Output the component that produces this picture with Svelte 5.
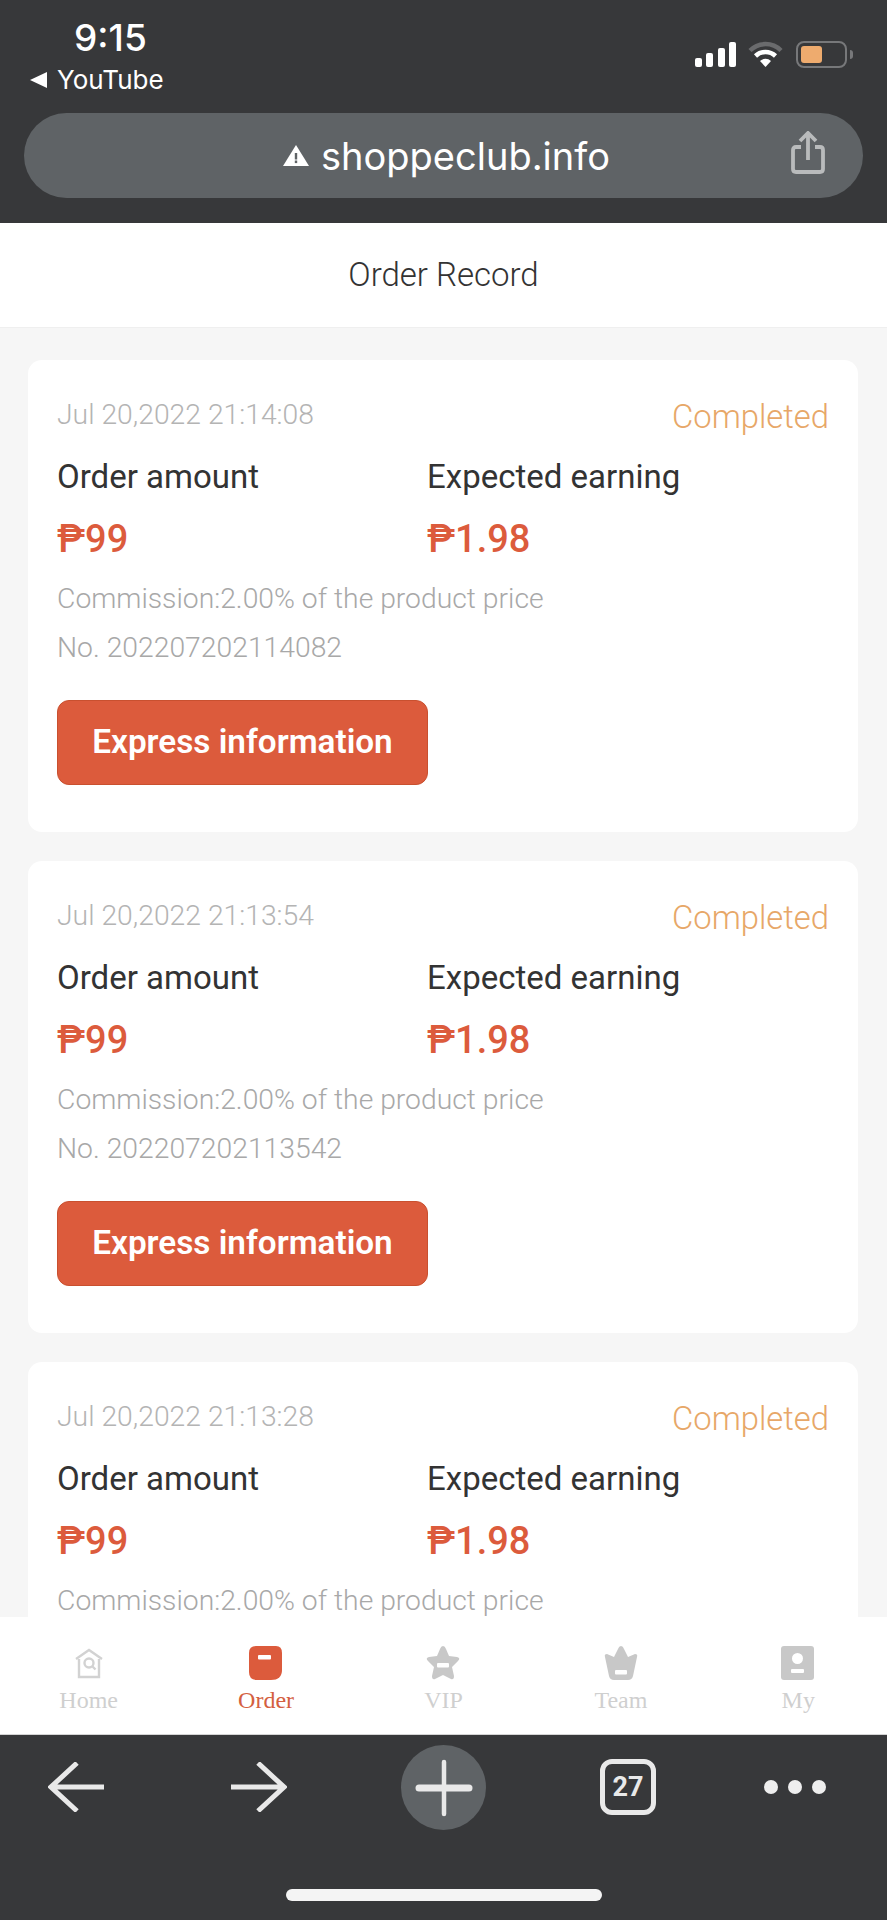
<script>
  const orders = [
    { time: 'Jul 20,2022 21:14:08', no: '202207202114082' },
    { time: 'Jul 20,2022 21:13:54', no: '202207202113542' },
    { time: 'Jul 20,2022 21:13:28', no: '202207202113282' },
  ];

  const tabs = ['Home', 'Order', 'VIP', 'Team', 'My'];
  const active = 'Order';
</script>

<div class="page">
  <header class="chrome">
    <div class="status">
      <div class="status-left">
        <div class="time">9:15</div>
        <div class="back-app"><span class="tri"></span>YouTube</div>
      </div>
      <div class="status-right">
        <svg class="signal" width="41" height="25" viewBox="0 0 41 25" fill="#fff" aria-hidden="true">
          <rect x="0" y="16" width="7" height="9" rx="2" />
          <rect x="11" y="11" width="7" height="14" rx="2" />
          <rect x="23" y="6" width="7" height="19" rx="2" />
          <rect x="34" y="0" width="7" height="25" rx="2" />
        </svg>
        <svg class="wifi" width="35" height="26" viewBox="0 0 35 26" aria-hidden="true">
          <path d="M2 9.5 A22 22 0 0 1 33 9.5" fill="none" stroke="#6a6b6d" stroke-width="4.5" />
          <path d="M7.5 15 A14.5 14.5 0 0 1 27.5 15" fill="none" stroke="#fff" stroke-width="4.5" />
          <path d="M12 20 L17.5 26 L23 20 A8 8 0 0 0 12 20 Z" fill="#fff" />
        </svg>
        <div class="battery"><span class="battery-fill"></span></div>
        <span class="battery-nub"></span>
      </div>
    </div>
    <div class="urlbar">
      <div class="url">
        <svg width="26" height="21" viewBox="0 0 26 21" aria-hidden="true">
          <path d="M13 0 L26 21 H0 Z" fill="#fff" />
          <rect x="11.8" y="8" width="2.4" height="6.5" fill="#5f6366" />
          <rect x="11.8" y="15.5" width="2.4" height="2.6" fill="#5f6366" />
        </svg>
        <span>shoppeclub.info</span>
      </div>
      <svg class="share" width="34" height="43" viewBox="0 0 34 43" fill="none" stroke="#b9bbbc" stroke-width="3.8" aria-hidden="true">
        <path d="M10 16 H5 Q2 16 2 19 V38 Q2 41 5 41 H29 Q32 41 32 38 V19 Q32 16 29 16 H24" />
        <path d="M17 29 V3 M9 10 L17 2 L25 10" />
      </svg>
    </div>
  </header>

  <div class="title">Order Record</div>

  <main class="list">
    {#each orders as order}
      <section class="card">
        <div class="card-top">
          <span class="date">{order.time}</span>
          <span class="state">Completed</span>
        </div>
        <div class="cols">
          <div class="col">
            <div class="label">Order amount</div>
            <div class="amount">₱99</div>
          </div>
          <div class="col">
            <div class="label">Expected earning</div>
            <div class="amount">₱1.98</div>
          </div>
        </div>
        <div class="meta">Commission:2.00% of the product price</div>
        <div class="meta">No. {order.no}</div>
        <button class="express">Express information</button>
      </section>
    {/each}
  </main>

  <nav class="tabbar">
    {#each tabs as tab}
      <div class="tab" class:on={tab === active}>
        <svg width="34" height="34" viewBox="0 0 34 34" aria-hidden="true">
          {#if tab === 'Home'}
            <g fill="none" stroke="#d2d2d2" stroke-width="2.4">
              <path d="M4 13 L17 4 L30 13" />
              <path d="M7 13 V31 H27 V13" />
              <circle cx="17" cy="17" r="4.5" />
              <path d="M20.5 20.5 L23.5 23.5" />
            </g>
          {:else if tab === 'Order'}
            <path d="M7 0 H27 Q33 0 33 7 V24 Q33 34 22 34 H8 Q0 34 0 26 V7 Q0 0 7 0 Z" fill="#dc5b3c" />
            <rect x="9" y="9" width="13" height="4.5" rx="1" fill="#fff" />
          {:else if tab === 'VIP'}
            <path d="M17 0 Q19 0 20 3 L23 10 L31 11 Q35 12 32 15 L26 21 L28 30 Q28 34 25 33 L17 29 L9 33 Q6 34 6 30 L8 21 L2 15 Q-1 12 3 11 L11 10 L14 3 Q15 0 17 0 Z" fill="#c8c8c8" />
            <rect x="11" y="17" width="12" height="4.5" rx="1" fill="#fff" />
          {:else if tab === 'Team'}
            <path d="M17 0 Q19 0 20 3 L24 11 L31 8 Q34 8 33 11 L29 30 Q28 34 24 34 H10 Q6 34 5 30 L1 11 Q0 8 3 8 L10 11 L14 3 Q15 0 17 0 Z" fill="#c8c8c8" />
            <rect x="11" y="24" width="12" height="4.5" rx="1" fill="#fff" />
          {:else}
            <rect x="0" y="0" width="33" height="34" rx="3" fill="#c8c8c8" />
            <circle cx="16.5" cy="12.5" r="5.5" fill="#fff" />
            <rect x="10" y="23" width="13" height="4" rx="1" fill="#fff" />
          {/if}
        </svg>
        <span>{tab}</span>
      </div>
    {/each}
  </nav>

  <footer class="toolbar">
    <div class="tools">
      <svg width="56" height="50" viewBox="0 0 56 50" fill="none" stroke="#e9e9e9" stroke-width="5" aria-hidden="true">
        <path d="M56 25 H4 M29 1 L3 25 L29 49" />
      </svg>
      <svg class="fwd" width="56" height="50" viewBox="0 0 56 50" fill="none" stroke="#e9e9e9" stroke-width="5" aria-hidden="true">
        <path d="M0 25 H52 M27 1 L53 25 L27 49" />
      </svg>
      <div class="plus">
        <svg width="58" height="58" viewBox="0 0 58 58" fill="none" stroke="#e9e9e9" stroke-linecap="round" aria-hidden="true">
          <path d="M29 3 V55" stroke-width="4.5" />
          <path d="M4 29 H54" stroke-width="7" />
        </svg>
      </div>
      <div class="count">27</div>
      <div class="dots"><i></i><i></i><i></i></div>
    </div>
    <div class="home-bar"></div>
  </footer>
</div>

<style>
  :global(body) {
    background: #f6f6f6;
  }

  .page {
    height: 1920px;
    display: flex;
    flex-direction: column;
    overflow: hidden;
    font-family: Roboto, sans-serif;
  }

  /* browser chrome */
  .chrome {
    height: 223px;
    flex: none;
    box-sizing: border-box;
    background: #37383a;
    color: #fff;
    padding: 0 24px;
  }

  .status {
    height: 113px;
    display: flex;
    justify-content: space-between;
  }

  .status-left {
    padding: 17px 0 0 6px;
  }

  .time {
    font: 500 37px/42px Inter, sans-serif;
    padding-left: 44px;
  }

  .back-app {
    display: flex;
    align-items: center;
    gap: 10px;
    margin-top: 6px;
    font: 400 26px/30px Inter, sans-serif;
  }

  .tri {
    width: 0;
    height: 0;
    border-style: solid;
    border-width: 8.5px 17px 8.5px 0;
    border-color: transparent #fff transparent transparent;
  }

  .status-right {
    display: flex;
    align-items: center;
    height: 26px;
    margin-top: 41px;
    margin-right: 10px;
  }

  .wifi {
    margin-left: 12px;
  }

  .battery {
    width: 51px;
    height: 27px;
    box-sizing: border-box;
    margin-left: 13px;
    padding: 3px;
    border: 2px solid #77787a;
    border-radius: 8px;
  }

  .battery-fill {
    display: block;
    width: 21px;
    height: 17px;
    border-radius: 3px;
    background: #eeab6e;
  }

  .battery-nub {
    width: 3px;
    height: 9px;
    margin-left: 3px;
    border-radius: 0 3px 3px 0;
    background: #77787a;
  }

  .urlbar {
    position: relative;
    height: 85px;
    box-sizing: border-box;
    padding-left: 6px;
    border-radius: 43px;
    background: #5f6366;
    display: flex;
    align-items: center;
    justify-content: center;
  }

  .url {
    display: flex;
    align-items: center;
    gap: 12px;
    font: 400 38px/50px Inter, sans-serif;
  }

  .share {
    position: absolute;
    right: 38px;
    top: 18px;
  }

  /* page */
  .title {
    height: 105px;
    flex: none;
    box-sizing: border-box;
    background: #fff;
    border-bottom: 1px solid #efefef;
    text-align: center;
    font-size: 33px;
    font-weight: 300;
    line-height: 103px;
    color: #333;
  }

  .list {
    flex: 1;
    min-height: 0;
    overflow: hidden;
    padding: 32px 29px 0 28px;
    display: flex;
    flex-direction: column;
    gap: 29px;
    background: #f6f6f6;
  }

  .card {
    flex: none;
    height: 472px;
    box-sizing: border-box;
    padding: 35px 29px 0;
    border-radius: 14px;
    background: #fff;
  }

  .card-top {
    display: flex;
    justify-content: space-between;
    align-items: flex-start;
  }

  .date {
    font-size: 28.3px;
    font-weight: 300;
    line-height: 40px;
    color: #b4b4b4;
  }

  .state {
    font-size: 32.8px;
    font-weight: 300;
    line-height: 44px;
    color: #e7a768;
  }

  .cols {
    display: flex;
    margin-top: 16px;
  }

  .col {
    width: 370px;
  }

  .label {
    font-size: 33px;
    line-height: 44px;
    color: #333;
  }

  .amount {
    margin-top: 18px;
    font-size: 38px;
    font-weight: 500;
    line-height: 44px;
    color: #dc5b3c;
  }

  .meta {
    font-size: 28.3px;
    font-weight: 300;
    line-height: 49px;
    color: #a8a8a8;
  }

  .cols + .meta {
    margin-top: 13px;
  }

  .express {
    display: block;
    width: 371px;
    height: 85px;
    margin-top: 28px;
    padding: 0 0 3px;
    border: 1px solid #c9502f;
    border-radius: 12px;
    background: #dc5b3c;
    color: #fff;
    font-family: Roboto, sans-serif;
    font-size: 33.3px;
    font-weight: 600;
  }

  /* bottom tabs */
  .tabbar {
    height: 118px;
    flex: none;
    box-sizing: border-box;
    background: #fff;
    border-bottom: 1px solid #d4d4d4;
    padding-top: 29px;
    display: grid;
    grid-template-columns: repeat(5, 1fr);
  }

  .tab {
    display: flex;
    flex-direction: column;
    align-items: center;
    font: 24px/30px "Liberation Serif", serif;
    color: #cfcfcf;
  }

  .tab span {
    margin-top: 5px;
  }

  .tab.on {
    color: #d4603f;
  }

  .toolbar {
    height: 185px;
    flex: none;
    background: #37383a;
  }

  .tools {
    height: 154px;
    box-sizing: border-box;
    padding: 10px 0 0 48px;
    display: flex;
    align-items: flex-start;
    gap: 114px;
  }

  .tools > svg {
    margin-top: 17px;
  }

  .tools > .fwd {
    margin-left: 13px;
  }

  .plus {
    width: 85px;
    height: 85px;
    border-radius: 50%;
    background: #5f6366;
    display: flex;
    align-items: center;
    justify-content: center;
  }

  .count {
    width: 56px;
    height: 56px;
    margin-top: 14px;
    box-sizing: border-box;
    border: 5px solid #e9e9e9;
    border-radius: 12px;
    color: #e9e9e9;
    text-align: center;
    font-size: 27px;
    font-weight: 700;
    line-height: 46px;
  }

  .dots {
    display: flex;
    gap: 10px;
    margin: 35px 0 0 -6px;
  }

  .dots i {
    width: 14px;
    height: 14px;
    border-radius: 50%;
    background: #eeeeee;
  }

  .home-bar {
    width: 316px;
    height: 12px;
    margin: 0 auto;
    border-radius: 6px;
    background: #f4f4f4;
  }
</style>
